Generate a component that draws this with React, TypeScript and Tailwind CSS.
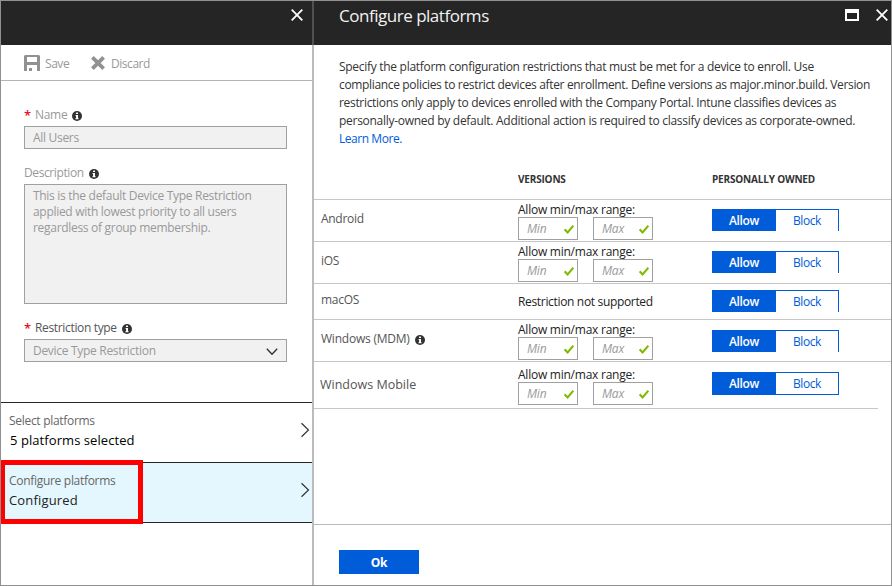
import React from "react";

function CloseIcon() {
  return (
    <svg width="12" height="12" viewBox="0 0 12 12" fill="none" stroke="#fff" strokeWidth="1.8">
      <path d="M0.7 0.7L11.3 11.3M11.3 0.7L0.7 11.3" />
    </svg>
  );
}

function InfoIcon() {
  return (
    <svg width="10" height="10" viewBox="0 0 10 10" className="shrink-0">
      <circle cx="5" cy="5" r="5" fill="#333" />
      <rect x="4" y="1.6" width="2" height="1.4" fill="#fff" />
      <path d="M3.6 4H6V7.2H6.6V8.2H3.4V7.2H4.1V5H3.6Z" fill="#fff" />
    </svg>
  );
}

function CheckIcon() {
  return (
    <svg width="10" height="9" viewBox="0 0 10 9" fill="none" stroke="#7fba00" strokeWidth="2.1">
      <path d="M0.6 4.3L3.6 7.4L9.4 0.7" />
    </svg>
  );
}

function ChevronRight() {
  return (
    <svg width="9" height="16" viewBox="0 0 9 16" fill="none" stroke="#333" strokeWidth="1.2">
      <path d="M0.5 1.2L7.5 8L0.5 14.8" />
    </svg>
  );
}

function VersionInput({ label }: { label: string }) {
  return (
    <div className="flex h-[23px] w-[60px] items-center justify-between border border-[#a0a0a0] pr-[3px] pl-2">
      <span className="text-[12px] leading-[21px] tracking-[-0.2px] text-[#999] italic">{label}</span>
      <span className="pt-[2px]"><CheckIcon /></span>
    </div>
  );
}

type Row = {
  name: string;
  nameClass: string;
  info?: boolean;
  range?: string;
  toggle: string;
  rowClass: string;
};

const rows: Row[] = [
  { name: "Android", nameClass: "pl-[7px] pt-[10px]", range: "pt-[2px]", toggle: "mt-[9px] h-[22px]", rowClass: "h-[42px] w-full" },
  { name: "iOS", nameClass: "pl-[7px] pt-[10px]", range: "pt-[2px]", toggle: "mt-[9px] h-[22px]", rowClass: "h-[42px] w-full" },
  { name: "macOS", nameClass: "pl-[7px] pt-[7px]", toggle: "mt-[6px] h-[22px]", rowClass: "h-[36px] w-full" },
  { name: "Windows (MDM)", nameClass: "pl-[7px] pt-[10px] tracking-[-0.22px]", info: true, range: "pt-[2px]", toggle: "mt-[10px] h-[22px]", rowClass: "h-[42px] w-full" },
  { name: "Windows Mobile", nameClass: "pl-[6px] pt-[14px] text-[12.5px] tracking-[0px]", range: "pt-[5px]", toggle: "mt-[10px] h-[23px] border-b", rowClass: "h-[47px] w-[564px]" },
];

function PlatformRow({ row }: { row: Row }) {
  return (
    <div className={`flex items-start border-b border-[#c6c6c6] ${row.rowClass}`}>
      <div className={`flex w-[204px] items-center leading-[18px] text-[#555] ${row.nameClass}`}>
        <span>{row.name}</span>
        {row.info && <span className="mt-[2px] ml-[5px]"><InfoIcon /></span>}
      </div>
      <div className="w-[194px] text-[#222]">
        {row.range ? (
          <div className={row.range}>
            <div className="h-[15px] leading-[16px] tracking-[-0.24px]">Allow min/max range:</div>
            <div className="flex gap-[15px]">
              <VersionInput label="Min" />
              <VersionInput label="Max" />
            </div>
          </div>
        ) : (
          <div className="pt-[9px] leading-[18px] tracking-[-0.33px]">Restriction not supported</div>
        )}
      </div>
      <div className={`flex w-[127px] border-t border-r border-[#015cda] ${row.toggle}`}>
        <button className="w-16 bg-[#015cda] text-center leading-[22px] font-semibold text-white">Allow</button>
        <button className="flex-1 text-center leading-[22px] tracking-[-0.4px] text-[#015cda]">Block</button>
      </div>
    </div>
  );
}

function LeftBlade() {
  return (
    <div className="flex w-[311px] shrink-0 flex-col">
      <div className="flex h-11 justify-end bg-[#252525] pt-[8px] pr-[9px]">
        <CloseIcon />
      </div>
      <div className="flex h-9 items-center border-b border-[#b4b4b4] pl-[23px] tracking-[-0.45px] text-[#999]">
        <svg width="16" height="16" viewBox="0 0 16 16">
          <path d="M1 0H15L16 1V16H13V10H3V16H0V1ZM3 2V7H13V2Z" fill="#919191" fillRule="evenodd" />
          <rect x="5" y="13" width="3" height="3" fill="#919191" />
        </svg>
        <span className="ml-[5px] w-[46px] pt-[2px]">Save</span>
        <svg width="14" height="14" viewBox="0 0 14 14" fill="none" stroke="#919191" strokeWidth="3.8">
          <path d="M1.4 1.4L12.6 12.6M12.6 1.4L1.4 12.6" />
        </svg>
        <span className="ml-[6px] pt-[2px]">Discard</span>
      </div>
      <div className="flex h-[321px] flex-col pt-[25px] pr-[25px] pl-[23px]">
        <div className="flex h-5 items-start text-[#999]">
          <span className="w-[11px] text-[13px] leading-[18px] font-semibold text-[#e81123]">*</span>
          <span className="mr-[5px] leading-[18px]">Name</span>
          <span className="mt-[5px]"><InfoIcon /></span>
        </div>
        <div className="h-[23px] border border-[#a0a0a0] bg-[#f1f1f1] pl-2 leading-[22px] text-[#999]">All Users</div>
        <div className="mt-[15px] flex h-5 items-start text-[#999]">
          <span className="mr-[5px] leading-[18px] tracking-[-0.4px]">Description</span>
          <span className="mt-[5px]"><InfoIcon /></span>
        </div>
        <div className="h-[120px] border border-[#a0a0a0] bg-[#f1f1f1] pt-[3px] pl-2 leading-4 whitespace-pre text-[#999]">
          {"This is the default Device Type Restriction\napplied with lowest priority to all users\nregardless of group membership."}
        </div>
        <div className="mt-[15px] flex h-5 items-start text-[#555]">
          <span className="w-[11px] text-[13px] leading-[18px] font-semibold text-[#e81123]">*</span>
          <span className="mr-[5px] leading-[18px] tracking-[-0.34px]">Restriction type</span>
          <span className="mt-[5px]"><InfoIcon /></span>
        </div>
        <div className="flex h-[23px] items-center justify-between border border-[#a0a0a0] bg-[#f1f1f1] pr-2 pl-2 leading-[21px] text-[#999]">
          <span>Device Type Restriction</span>
          <svg width="12" height="8" viewBox="0 0 12 8" fill="none" stroke="#333" strokeWidth="1.4" className="mt-[2px]">
            <path d="M0.8 0.8L6 6.2L11.2 0.8" />
          </svg>
        </div>
      </div>
      <div className="flex h-[61px] items-center justify-between border-t border-b border-[#252525] pr-[2px] pl-2">
        <div className="-mt-1">
          <div className="h-[19px] leading-[20px] text-[#666]">Select platforms</div>
          <div className="pl-px text-[13px] leading-5 tracking-[0.07px] text-black">5 platforms selected</div>
        </div>
        <div className="-mt-[6px]"><ChevronRight /></div>
      </div>
      <div className="flex h-[60px] items-center justify-between border-b border-[#252525] bg-[#e4f7ff] pr-[2px] pl-2">
        <div className="-mt-1">
          <div className="h-[19px] leading-[20px] text-[#666]">Configure platforms</div>
          <div className="text-[13px] leading-5 tracking-[0.16px] text-[#222]">Configured</div>
        </div>
        <div className="-mt-[6px]"><ChevronRight /></div>
      </div>
    </div>
  );
}

function RightBlade() {
  return (
    <div className="flex min-w-0 flex-1 flex-col">
      <div className="flex h-11 items-start justify-between bg-[#252525] pr-[3px] pl-[25px]">
        <h1 className="pt-[3px] text-[17px] leading-[24px] tracking-[-0.48px] text-[#f2f2f2]">Configure platforms</h1>
        <div className="flex gap-[17px] pt-[8px]">
          <span className="h-3 w-[14px] border-x-2 border-t-4 border-b-2 border-white" />
          <CloseIcon />
        </div>
      </div>
      <div className="h-[102px] pt-[13px] pl-[25px] leading-[18px] whitespace-nowrap text-[#333]">
        <p className="tracking-[-0.29px]">Specify the platform configuration restrictions that must be met for a device to enroll. Use</p>
        <p className="tracking-[-0.34px]">compliance policies to restrict devices after enrollment. Define versions as major.minor.build. Version</p>
        <p className="tracking-[-0.32px]">restrictions only apply to devices enrolled with the Company Portal. Intune classifies devices as</p>
        <p className="tracking-[-0.28px]">personally-owned by default. Additional action is required to classify devices as corporate-owned.</p>
        <a className="tracking-[-0.45px] text-[#015cda]">Learn More.</a>
      </div>
      <div className="flex h-[53px] items-center border-b border-[#c6c6c6] pt-[13px] pl-[204px] text-[10px] font-bold tracking-[-0.18px] text-[#333]">
        <span className="w-[194px]">VERSIONS</span>
        <span>PERSONALLY OWNED</span>
      </div>
      {rows.map((row) => (
        <PlatformRow key={row.name} row={row} />
      ))}
      <div className="mt-auto h-[61px] border-t border-[#b9b9b9] pt-[25px] pl-[25px]">
        <button className="h-6 w-20 bg-[#015cda] text-center leading-[25px] font-bold text-white">Ok</button>
      </div>
    </div>
  );
}

export default function App() {
  return (
    <div className="relative flex h-[586px] w-[892px] overflow-hidden border border-[#919191] bg-white font-['Open_Sans','Noto_Sans',sans-serif] text-[12px] tracking-[-0.3px]">
      <LeftBlade />
      <div className="w-[2px] shrink-0 bg-[#bbb]">
        <div className="h-11 bg-[#505050]" />
      </div>
      <RightBlade />
      <div className="absolute top-[459px] -left-px h-16 w-[143px] border-[5px] border-[#ff0000]" />
    </div>
  );
}
